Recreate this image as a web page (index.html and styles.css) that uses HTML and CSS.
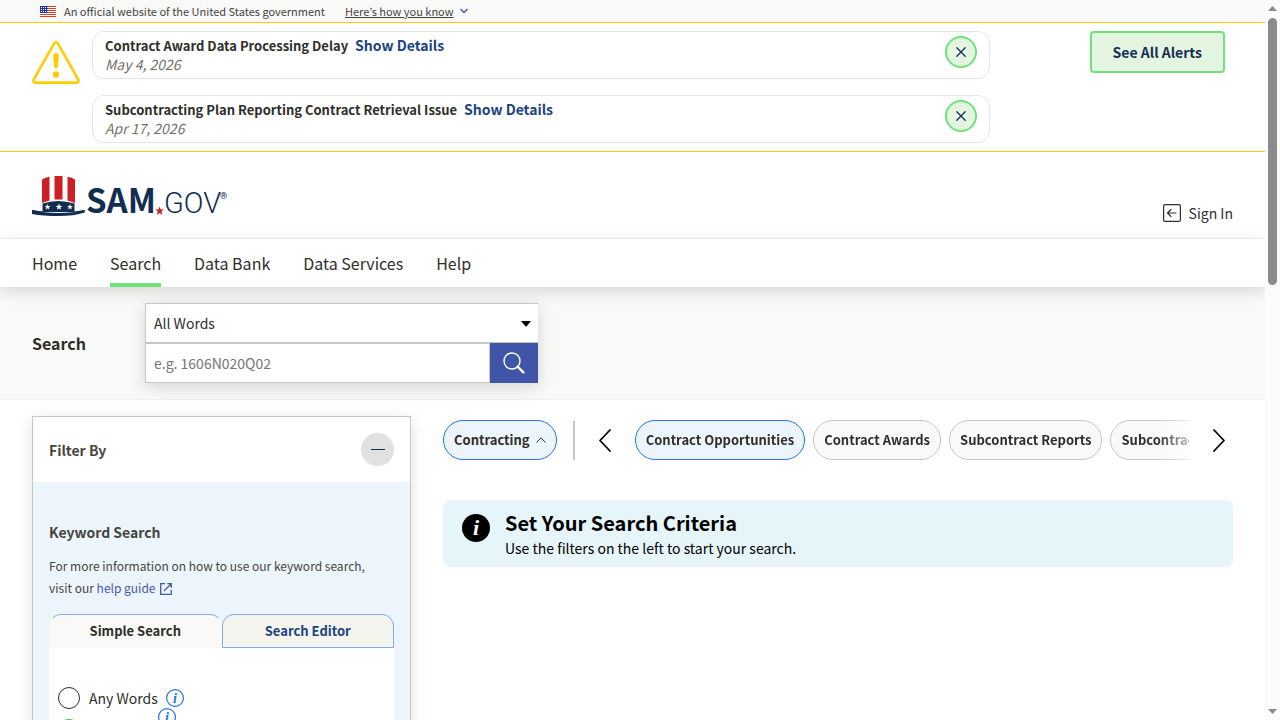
FILE: index.html
```html
<!DOCTYPE html>
<html lang="en">

<head>
  <meta charset="UTF-8">
  <meta name="viewport" content="width=device-width, initial-scale=1.0">
  <title>SAM.gov | Search</title>
  <link rel="stylesheet" href="styles.css">
</head>

<body>
  <div class="page">
    <div class="gov-banner">
      <svg class="flag" width="16" height="11" viewBox="0 0 16 11" aria-hidden="true">
        <rect width="16" height="11" fill="#fff"/>
        <path d="M0 .5h16M0 2.5h16M0 4.5h16M0 6.5h16M0 8.5h16M0 10.5h16" stroke="#db3e1f"/>
        <rect width="8" height="7" fill="#1e33b1"/>
        <path d="M1 1.5h7M1 3.5h7M1 5.5h7" stroke="#fff" stroke-dasharray="1 1"/>
      </svg>
      <span>An official website of the United States government</span>
      <button class="gov-toggle" type="button"><span>Here’s how you know</span>
        <svg width="8" height="6" viewBox="0 0 8 6" fill="none" stroke="#4257a8" stroke-width="1.5"><path d="M.5 1 4 4.500 7.500 1"/></svg>
      </button>
    </div>

    <section class="alerts">
      <svg class="alert-icon" width="48" height="43" viewBox="0 0 48 43" aria-hidden="true">
        <path d="M22.300 2.200a2 2 0 0 1 3.400 0L46.300 38.600a2 2 0 0 1-1.700 3H3.400a2 2 0 0 1-1.700-3Z" fill="none" stroke="#face00" stroke-width="2.600" stroke-linejoin="round"/>
        <path d="M21.200 14.500q0-2.500 2.800-2.500t2.800 2.500l-.9 11q-.2 2-1.900 2t-1.900-2Z" fill="#face00"/>
        <circle cx="24" cy="33.500" r="3.200" fill="#face00"/>
      </svg>
      <div class="alert-list">
        <div class="alert-card">
          <div>
            <p class="alert-title">Contract Award Data Processing Delay <a href="#">Show Details</a></p>
            <p class="alert-date">May 4, 2026</p>
          </div>
          <button class="close-btn" type="button" aria-label="Close">
            <svg width="10" height="10" viewBox="0 0 10 10" stroke="#162e51" stroke-width="1.300" stroke-linecap="round"><path d="m.8.8 8.400 8.400M9.200.8.8 9.200"/></svg>
          </button>
        </div>
        <div class="alert-card">
          <div>
            <p class="alert-title">Subcontracting Plan Reporting Contract Retrieval Issue <a href="#">Show Details</a></p>
            <p class="alert-date">Apr 17, 2026</p>
          </div>
          <button class="close-btn" type="button" aria-label="Close">
            <svg width="10" height="10" viewBox="0 0 10 10" stroke="#162e51" stroke-width="1.300" stroke-linecap="round"><path d="m.8.8 8.400 8.400M9.200.8.8 9.200"/></svg>
          </button>
        </div>
      </div>
      <button class="see-all" type="button">See All Alerts</button>
    </section>

    <header class="header">
      <a class="logo" href="#" aria-label="SAM.gov home">
        <svg width="200" height="40" viewBox="0 0 200 40">
          <path d="M10 3.500Q13 1.500 17.500.8V24.500L10 27ZM22.500 0h8v23.500h-8ZM35.500.8Q40 1.500 43 3.500V27l-7.500-2.500Z" fill="#cd2026"/>
          <path d="M10.500 27.500Q26 22.500 42.500 27.500V36h-32Z" fill="#112e51"/>
          <path d="M0 34Q12 37 26.500 37T53 34l-.5 2.500Q42 40 26.500 40T0 38Z" fill="#112e51"/>
          <path d="M0 34l10.500 1.500L11 38 2 38ZM53 34l-10.500 1.500V38l9-1.500Z" fill="#112e51"/>
          <path d="m27 27.500.9 2.300 2.300.1-1.800 1.500.6 2.300-2-1.300-2 1.300.6-2.300-1.800-1.500 2.300-.1Z" fill="#fff"/>
          <path d="m15.500 28 .8 2 2 .1-1.500 1.300.5 2-1.800-1.100-1.800 1.100.5-2-1.500-1.300 2-.1ZM38 28l.8 2 2 .1-1.500 1.300.5 2-1.800-1.100-1.800 1.100.5-2-1.500-1.300 2-.1Z" fill="#fff"/>
          <text class="logo-sam" x="54" y="37">SAM</text>
          <path d="m127.600 30.500 1.100 3h3.300l-2.600 2.100 1 3.300-2.800-1.900-2.800 1.900 1-3.300-2.600-2.100h3.300Z" fill="#cd2026"/>
          <text class="logo-gov" x="132" y="37">GOV</text>
          <text class="logo-reg" x="188" y="23">®</text>
        </svg>
      </a>
      <a class="sign-in" href="#">
        <svg width="18" height="18" viewBox="0 0 18 18" fill="none" stroke="#2e2e2a" stroke-width="1.200" stroke-linecap="round"><rect x=".6" y=".6" width="16.800" height="16.800" rx="1.500"/><path d="M13 9H5M8 5.500 4.500 9 8 12.500"/></svg>
        <span>Sign In</span>
      </a>
    </header>

    <nav class="nav">
      <a href="#">Home</a>
      <a class="active" href="#">Search</a>
      <a href="#">Data Bank</a>
      <a href="#">Data Services</a>
      <a href="#">Help</a>
    </nav>

    <section class="search-bar">
      <h1>Search</h1>
      <form class="search-form">
        <div class="select-wrap">
          <select aria-label="Search type">
            <option>All Words</option>
            <option>Any Words</option>
            <option>Exact Phrase</option>
          </select>
        </div>
        <div class="search-row">
          <input type="text" placeholder="e.g. 1606N020Q02" aria-label="Keyword">
          <button class="search-btn" type="submit" aria-label="Search">
            <svg width="22" height="22" viewBox="0 0 22 22" fill="none" stroke="#fff" stroke-linecap="round"><circle cx="9" cy="9" r="8" stroke-width="1.400"/><path d="m14.600 14.600 5.800 5.800" stroke-width="2.400"/></svg>
          </button>
        </div>
      </form>
    </section>

    <main class="content">
      <aside class="filters">
        <div class="filters-head">
          <h2>Filter By</h2>
          <button class="collapse-btn" type="button" aria-label="Collapse filters">
            <svg width="14" height="1" viewBox="0 0 14 1"><rect width="14" height="1" fill="#162e51"/></svg>
          </button>
        </div>
        <div class="filters-body">
          <h3>Keyword Search</h3>
          <p>For more information on how to use our keyword search, visit our <a href="#">help guide
            <svg width="12" height="12" viewBox="0 0 12 12" fill="none" stroke="#4257b2" stroke-width="1.300"><path d="M5 .7H.7v10.600h10.600V7M7.300.7h4v4M11.300.7 4 8"/></svg></a></p>
          <div class="tabs" role="tablist">
            <button class="tab selected" type="button" role="tab" aria-selected="true">Simple Search</button>
            <button class="tab" type="button" role="tab" aria-selected="false">Search Editor</button>
          </div>
          <div class="tab-panel">
            <div class="radio-row">
              <input type="radio" name="mode" id="anyWords">
              <label for="anyWords">Any Words</label>
              <svg class="info" width="18" height="18" viewBox="0 0 18 18" aria-hidden="true"><circle cx="9" cy="9" r="8.400" fill="none" stroke="#2672de" stroke-width="1.200"/><text x="9" y="14">i</text></svg>
            </div>
            <div class="radio-row">
              <input type="radio" name="mode" id="allWords" checked>
              <label for="allWords">All Words</label>
              <svg class="info raised" width="18" height="18" viewBox="0 0 18 18" aria-hidden="true"><circle cx="9" cy="9" r="8.400" fill="none" stroke="#2672de" stroke-width="1.200"/><text x="9" y="14">i</text></svg>
            </div>
          </div>
        </div>
      </aside>

      <section class="results">
        <div class="domains">
          <button class="pill on" type="button">Contracting
            <svg width="10" height="6" viewBox="0 0 10 6" fill="none" stroke="#2e2e2a"><path d="M.5 5.500 5 .8l4.500 4.700"/></svg>
          </button>
          <span class="divider"></span>
          <button class="arrow" type="button" aria-label="Previous">
            <svg width="12" height="23" viewBox="0 0 12 23" fill="none" stroke="#000" stroke-width="1.800" stroke-linecap="round" stroke-linejoin="round"><path d="M11 1 1 11.500 11 22"/></svg>
          </button>
          <div class="pill-list">
            <button class="pill on" type="button">Contract Opportunities</button>
            <button class="pill" type="button">Contract Awards</button>
            <button class="pill" type="button">Subcontract Reports</button>
            <button class="pill" type="button">Subcontract Plans</button>
          </div>
          <button class="arrow" type="button" aria-label="Next">
            <svg width="12" height="23" viewBox="0 0 12 23" fill="none" stroke="#000" stroke-width="1.800" stroke-linecap="round" stroke-linejoin="round"><path d="m1 1 10 10.500L1 22"/></svg>
          </button>
        </div>
        <div class="notice">
          <svg width="28" height="28" viewBox="0 0 28 28" aria-hidden="true"><circle cx="14" cy="14" r="14"/><text x="14" y="21">i</text></svg>
          <div>
            <h2>Set Your Search Criteria</h2>
            <p>Use the filters on the left to start your search.</p>
          </div>
        </div>
      </section>
    </main>
  </div>

  <div class="scrollbar" aria-hidden="true">
    <svg width="9" height="5" viewBox="0 0 9 5"><path d="M4.500 0 9 5H0Z" fill="#8b8b8b"/></svg>
    <div class="track"><div class="thumb"></div></div>
    <svg width="9" height="5" viewBox="0 0 9 5"><path d="M4.500 5 9 0H0Z" fill="#8b8b8b"/></svg>
  </div>
</body>

</html>
```

FILE: styles.css
```css
* {
  margin: 0;
  padding: 0;
  box-sizing: border-box;
}

body {
  font-family: "Noto Sans CJK KR", "Open Sans", sans-serif;
  font-size: 14px;
  line-height: 20px;
  color: #2e2e2a;
  background-color: #fff;
  height: 100vh;
  display: flex;
  overflow: hidden;
}

button,
input,
select {
  font: inherit;
  color: inherit;
}

button {
  cursor: pointer;
}

a {
  color: inherit;
  text-decoration: none;
}

svg {
  display: block;
  flex: none;
  overflow: visible;
}

.page {
  flex: 1;
  min-width: 0;
  overflow: hidden;
}

/* Government banner */
.gov-banner {
  display: flex;
  align-items: center;
  gap: 8px;
  padding: 1px 40px;
  font-size: 11px;
  background-color: #f9f9f7;
  border-bottom: 1px solid #ffca00;
  color: #454540;
}

.gov-toggle {
  display: flex;
  align-items: center;
  gap: 6px;
  margin-left: 12px;
  border: none;
  background: none;
}

.gov-toggle span {
  text-decoration: underline;
}

/* Alerts */
.alerts {
  display: flex;
  align-items: flex-start;
  padding: 8px 40px 8px 32px;
  border-bottom: 1px solid #face00;
}

.alert-icon {
  margin: 10px 12px 0 0;
}

.alert-list {
  flex: 1;
  display: flex;
  flex-direction: column;
  gap: 16px;
  margin-right: 100px;
}

.alert-card {
  display: flex;
  justify-content: space-between;
  align-items: flex-start;
  padding: 4px 12px 5px;
  border: 1px solid #e6e6e2;
  border-radius: 12px;
  line-height: 18px;
}

.alert-title {
  font-size: 13px;
  font-weight: 700;
}

.alert-title a {
  margin-left: 4px;
  font-size: 14px;
  color: #1a4480;
}

.alert-date {
  font-style: italic;
  color: #71716a;
}

.close-btn {
  display: flex;
  align-items: center;
  justify-content: center;
  width: 32px;
  height: 32px;
  border: 2px solid #70e17b;
  border-radius: 50%;
  background-color: #e3f5e1;
}

.see-all {
  padding: 9px 21px;
  border: 2px solid #70e17b;
  border-radius: 4px;
  background-color: #e3f5e1;
  font-weight: 700;
  color: #162e51;
}

/* Header */
.header {
  display: flex;
  justify-content: space-between;
  align-items: flex-end;
  padding: 24px 32px 15px;
  border-bottom: 1px solid #f1f1ef;
}

.logo {
  margin-bottom: 7px;
}

.logo-sam {
  font-size: 33px;
  font-weight: 700;
  fill: #112e51;
}

.logo-gov {
  font-family: Roboto, sans-serif;
  font-size: 29px;
  font-weight: 300;
  fill: #112e51;
}

.logo-reg {
  font-family: Roboto, sans-serif;
  font-size: 9px;
  fill: #112e51;
}

.sign-in {
  display: flex;
  align-items: center;
  gap: 8px;
}

.nav {
  position: relative;
  display: flex;
  gap: 33px;
  padding: 0 32px;
  font-size: 16px;
  background-color: #fff;
  box-shadow: 0 4px 16px rgba(0, 0, 0, 0.15);
}

.nav a {
  padding: 12px 0;
  line-height: 24px;
}

.nav .active {
  box-shadow: inset 0 -4px 0 #70e17b;
}

/* Search bar */
.search-bar {
  display: flex;
  align-items: center;
  padding: 16px 32px;
  background-color: #f9f9f7;
  border-bottom: 1px solid #f1f1ef;
}

.search-bar h1 {
  width: 113px;
  font-size: 16px;
  font-weight: 700;
}

.search-form {
  width: 393px;
  box-shadow: 0 4px 16px rgba(0, 0, 0, 0.15);
}

.select-wrap {
  position: relative;
}

.select-wrap::after {
  content: "";
  position: absolute;
  right: 7px;
  top: 18px;
  border: 5px solid transparent;
  border-top: 6px solid #000;
  border-bottom: none;
}

.select-wrap select {
  display: block;
  width: 100%;
  height: 40px;
  padding: 0 8px;
  border: 1px solid #c6c6c2;
  border-right: none;
  border-radius: 0;
  appearance: none;
  background-color: #fff;
}

.search-row {
  display: flex;
}

.search-row input {
  flex: 1;
  min-width: 0;
  height: 40px;
  padding: 0 8px;
  border: 1px solid #c6c6c2;
}

.search-row input::placeholder {
  color: #757575;
}

.search-btn {
  display: flex;
  align-items: center;
  justify-content: center;
  width: 48px;
  border: none;
  background-color: #4055a8;
}

/* Content */
.content {
  display: grid;
  grid-template-columns: repeat(12, 1fr);
  gap: 32px;
  padding: 16px 32px;
}

.filters {
  grid-column: span 4;
  border: 1px solid #c6c6c6;
  box-shadow: 0 4px 16px rgba(0, 0, 0, 0.12);
}

.filters-head {
  display: flex;
  justify-content: space-between;
  align-items: center;
  padding: 16px;
}

.filters h2,
.filters h3 {
  font-size: 14px;
  color: #454540;
}

.collapse-btn {
  display: flex;
  align-items: center;
  justify-content: center;
  width: 33px;
  height: 33px;
  border: none;
  border-radius: 50%;
  background-color: #e1e1e1;
}

.filters-body {
  padding: 40px 16px 0;
  background-color: #edf5fc;
}

.filters-body p {
  margin: 13px 0 15px;
  padding-right: 16px;
  font-size: 12px;
  line-height: 22px;
  color: #454540;
}

.filters-body a {
  color: #4257b2;
}

.filters-body a svg {
  display: inline-block;
  margin-left: 2px;
  vertical-align: -2px;
}

.tabs {
  display: flex;
}

.tab {
  flex: 1;
  height: 34px;
  border: 1px solid #83abf0;
  border-radius: 12px 12px 0 0;
  background-color: #f5f5f0;
  font-size: 13px;
  font-weight: 700;
  color: #1a4480;
}

.tab.selected {
  border-color: #83abf0 transparent transparent;
  background-color: #f9f9f7;
  color: #2e2e2a;
}

.tab-panel {
  padding: 34px 9px;
  background-color: #fff;
}

.radio-row {
  display: flex;
  align-items: center;
  height: 32px;
}

.radio-row input {
  appearance: none;
  width: 22px;
  height: 22px;
  margin-right: 9px;
  border: 1px solid #2e2e2a;
  border-radius: 50%;
}

.radio-row input:checked {
  border: 2px solid #4ac25a;
}

.info {
  margin-left: 8px;
}

.info text {
  font: italic 700 14px "Liberation Serif", serif;
  text-anchor: middle;
  fill: #2672de;
}

/* tooltip icon rises above its own row */
.info.raised {
  align-self: flex-start;
  margin-top: -6px;
}

.results {
  grid-column: span 8;
  min-width: 0;
}

.domains {
  display: flex;
  align-items: center;
  padding-top: 4px;
}

.pill {
  display: flex;
  align-items: center;
  gap: 6px;
  flex: none;
  height: 40px;
  padding: 0 10px;
  border: 1px solid #c6c6c6;
  border-radius: 20px;
  background-color: #f9f9f7;
  font-size: 13px;
  font-weight: 700;
}

.pill.on {
  border-color: #2672de;
  background-color: #edf5fc;
}

.divider {
  width: 2px;
  height: 39px;
  margin-left: 16px;
  background-color: #c6c6c6;
}

.arrow {
  padding: 8px 24px;
  border: none;
  background: none;
}

.arrow:last-child {
  padding-right: 8px;
}

.pill-list {
  flex: 1;
  min-width: 0;
  display: flex;
  gap: 8px;
  overflow: hidden;
  mask-image: linear-gradient(to left, rgba(0, 0, 0, 0.3), #000 32px);
}

.notice {
  display: flex;
  gap: 15px;
  margin-top: 40px;
  padding: 10px 19px 7px;
  border-radius: 8px;
  background-color: #e5f5fa;
  color: #000;
  line-height: 24px;
}

.notice svg {
  margin-top: 4px;
}

.notice text {
  font: italic 700 22px "Liberation Serif", serif;
  text-anchor: middle;
  fill: #fff;
}

.notice h2 {
  font-size: 20px;
  line-height: 26px;
}

/* Scrollbar */
.scrollbar {
  width: 15px;
  display: flex;
  flex-direction: column;
  align-items: center;
  gap: 7px;
  padding: 6px 0;
  background-color: #fcfcfc;
}

.track {
  flex: 1;
  width: 9px;
}

.thumb {
  height: 39%;
  border-radius: 5px;
  background-color: #8b8b8b;
}
```
